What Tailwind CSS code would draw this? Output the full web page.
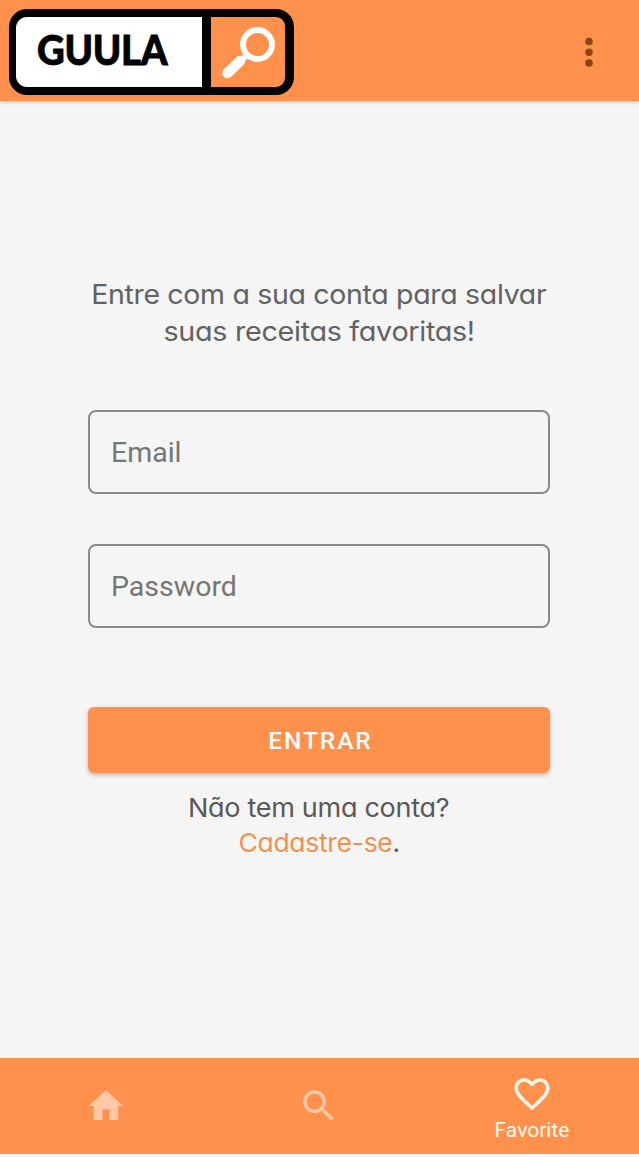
<!DOCTYPE html>
<html lang="pt-BR">
<head>
<meta charset="utf-8">
<title>Guula</title>
<script src="https://cdn.jsdelivr.net/npm/@tailwindcss/browser@4"></script>
</head>
<body class="bg-[#fffaf5] font-['Roboto',sans-serif]">
<div class="flex h-[1154px] w-[639px] flex-col overflow-hidden bg-[#f5f5f5]">
  <header class="z-10 flex h-[101px] shrink-0 items-start justify-between bg-[#ff914d] pt-[9px] pr-[38px] pl-[9px] shadow-[0_1px_4px_rgba(0,0,0,0.22)]">
    <div class="flex h-[86px] w-[285px] overflow-hidden rounded-[18px] bg-black py-[8px] pr-[9px] pl-[7px]">
      <div class="flex w-[186px] items-center rounded-l-[11px] bg-white pb-[5px] pl-[21px]">
        <span class="origin-left scale-x-[0.935] font-['Lato',sans-serif] text-[41px] leading-none font-black tracking-[-0.3px] whitespace-nowrap text-black [-webkit-text-stroke:0.8px_black]">GUULA</span>
      </div>
      <div class="ml-[9px] flex-1 rounded-r-[9px] bg-[#ff914d]">
        <svg class="h-[70px] w-[74px]" viewBox="211 17 74 70" fill="none" stroke="#fff" stroke-linecap="round">
          <circle cx="257.500" cy="44.500" r="14.500" stroke-width="6"/>
          <path d="M247 55l-4 4" stroke-width="6" stroke-linecap="butt"/>
          <path d="M240 61L227.500 73" stroke-width="10.500"/>
        </svg>
      </div>
    </div>
    <svg class="mt-[28px] h-[30px] w-[24px]" viewBox="0 0 24 30" fill="#8b4513"><circle cx="12" cy="4.500" r="3.800"/><circle cx="12" cy="15.200" r="3.800"/><circle cx="12" cy="26" r="3.800"/></svg>
  </header>

  <main class="flex flex-1 flex-col items-center pt-[175px] pr-px">
    <p class="text-center font-['Inter',sans-serif] text-[27px] leading-[37px] font-normal tracking-[-0.3px] whitespace-nowrap text-[#626262] [font-feature-settings:'cv11']"><span class="inline-block scale-x-[1.055]">Entre com a sua conta para salvar</span><br><span class="inline-block scale-x-[1.065]">suas receitas favoritas!</span></p>
    <div class="mt-[60px] flex h-[84px] w-[462px] items-center rounded-[8px] border-2 border-[#8a8a8a] pt-[3px] pl-[21px] text-[28.5px] text-[#757575]"><span>Email</span></div>
    <div class="mt-[50px] flex h-[84px] w-[462px] items-center rounded-[8px] border-2 border-[#8a8a8a] pt-[3px] pl-[21px] text-[28.5px] text-[#757575]"><span>Password</span></div>
    <button class="mt-[79px] flex h-[66px] w-[462px] items-center justify-center rounded-[6px] bg-[#ff914d] pt-[2px] pl-[3px] text-[24.5px] font-medium tracking-[1.9px] text-white shadow-[0_2px_4px_rgba(0,0,0,0.25)]">ENTRAR</button>
    <p class="mt-[17px] text-center font-['Inter',sans-serif] text-[26px] leading-[35px] font-normal tracking-[-0.3px] whitespace-nowrap text-[#585858] [font-feature-settings:'cv11']"><span class="inline-block scale-x-[1.04]">Não tem uma conta?</span><br><span class="inline-block scale-x-[1.02]"><a class="text-[#f0924f]">Cadastre-se</a>.</span></p>
  </main>

  <nav class="grid h-[96px] shrink-0 grid-cols-3 bg-[#ff914d]">
    <div class="flex justify-center pt-[27px] pr-[2px]"><svg class="h-[42px] w-[42px]" viewBox="0 0 24 24" fill="#ffc8a6"><path d="M10 20v-6h4v6h5v-8h3L12 3 2 12h3v8z"/></svg></div>
    <div class="flex justify-center pt-[27px] pr-[2px]"><svg class="h-[42px] w-[42px]" viewBox="0 0 24 24" fill="#ffc8a6"><path d="M15.500 14h-.79l-.28-.27A6.471 6.471 0 0 0 16 9.500 6.500 6.500 0 1 0 9.500 16c1.610 0 3.090-.59 4.230-1.570l.27.28v.79l5 4.990L20.490 19l-4.990-5zm-6 0C7.010 14 5 11.990 5 9.500S7.010 5 9.500 5 14 7.010 14 9.500 11.990 14 9.500 14z"/></svg></div>
    <div class="flex flex-col items-center pt-[15px] pr-px">
      <svg class="h-[42px] w-[42px]" viewBox="0 0 24 24" fill="#fff8ec"><path d="M16.500 3c-1.740 0-3.410.81-4.500 2.090C10.910 3.810 9.240 3 7.500 3 4.420 3 2 5.420 2 8.500c0 3.780 3.400 6.860 8.550 11.540L12 21.350l1.450-1.320C18.600 15.360 22 12.280 22 8.500 22 5.420 19.580 3 16.500 3zm-4.400 15.550l-.1.100-.1-.1C7.140 14.240 4 11.390 4 8.500 4 6.500 5.500 5 7.500 5c1.540 0 3.040.99 3.570 2.360h1.870C13.460 5.990 14.960 5 16.500 5c2 0 3.500 1.500 3.500 3.500 0 2.890-3.140 5.740-7.900 10.050z"/></svg>
      <span class="mt-[3px] text-[21px] leading-[25px] text-[#fff8ec]">Favorite</span>
    </div>
  </nav>
</div>
</body>
</html>
